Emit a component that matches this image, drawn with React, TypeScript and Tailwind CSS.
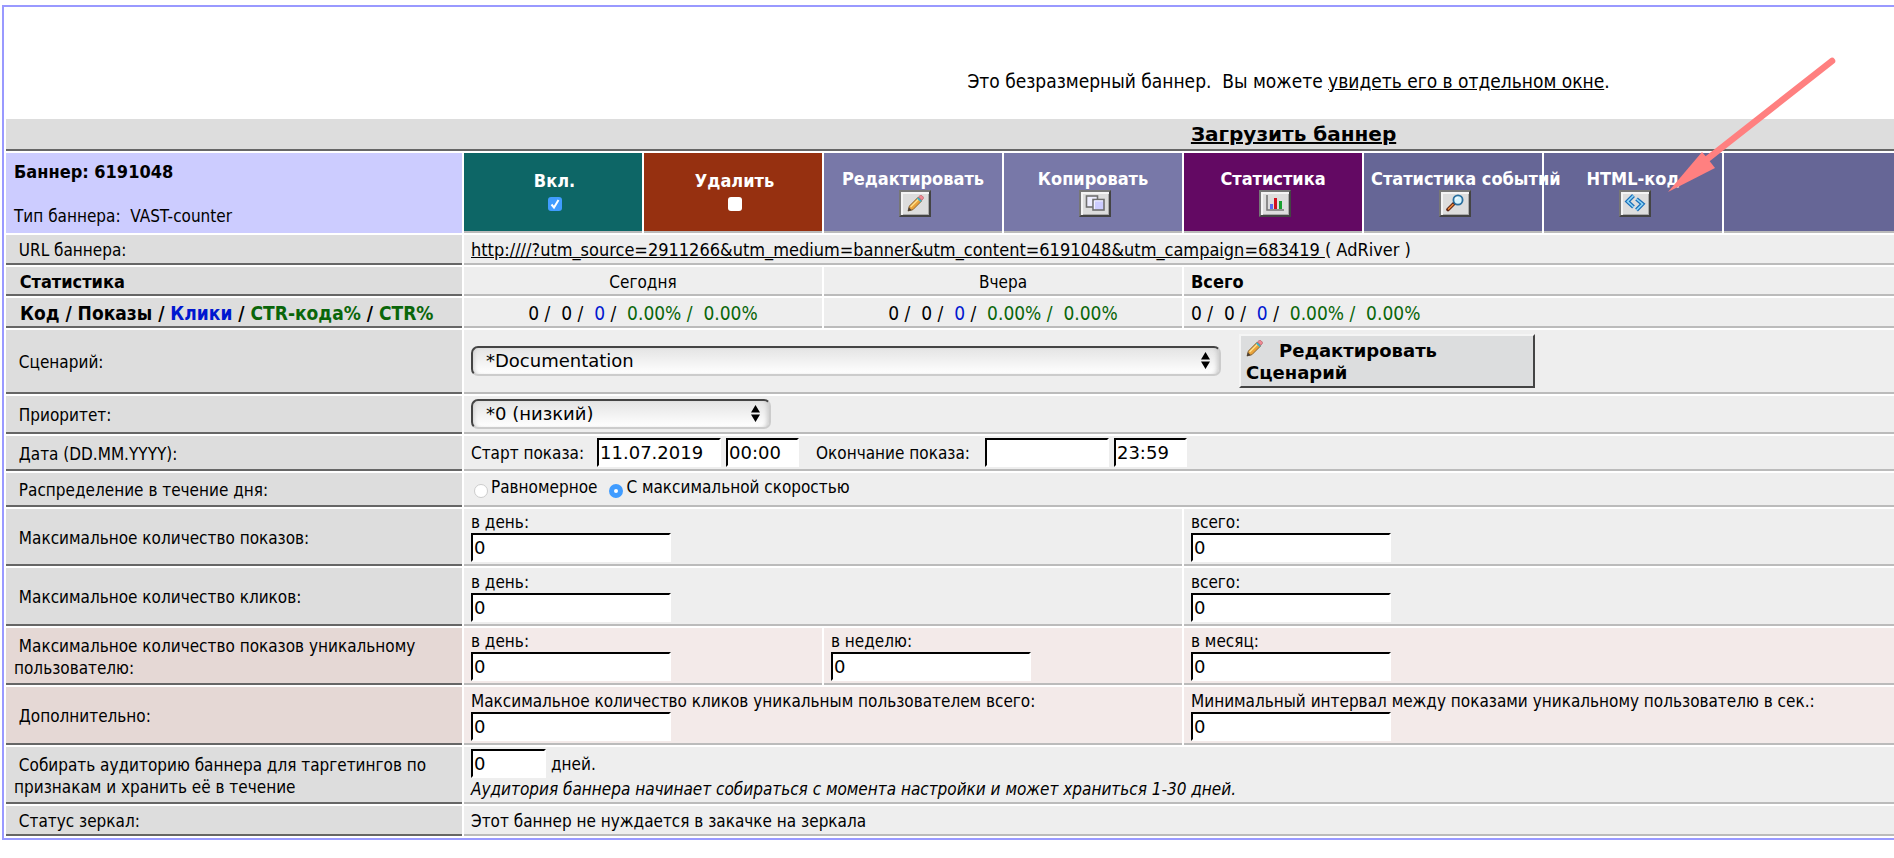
import type { ReactNode } from 'react';
import clsx from 'clsx';

const CONDENSED = "font-['DejaVu_Sans_Condensed','DejaVu_Sans',sans-serif]";
const WIDE = "font-['DejaVu_Sans',sans-serif]";

function PencilIcon() {
  return (
    <svg width="17" height="17" viewBox="0 0 16 16" aria-hidden="true">
      <path d="M1 15l1.2-4.6L10.4 2.2l3.4 3.4-8.2 8.2z" fill="#e9a23a" stroke="#7a5a2e" strokeWidth=".8" />
      <path d="M3.4 11.2l8-8" stroke="#ffe08a" strokeWidth="1.3" />
      <path d="M9.4 3.2l3.4 3.4 1.2-1.2-3.4-3.4z" fill="#35b4cf" />
      <path d="M10.8 1.8l1.4-1.2c.6-.5 1.4-.4 2 .2l.9.9c.6.6.6 1.4 0 2l-1.2 1.2z" fill="#f08a94" stroke="#b2545c" strokeWidth=".6" />
      <path d="M.8 15.2l.9-3.6 2.700 2.700z" fill="#4a4038" />
    </svg>
  );
}

function CopyIcon() {
  return (
    <svg width="20" height="18" viewBox="0 0 20 18" aria-hidden="true">
      <rect x="1.5" y="2" width="11" height="11" fill="#eeeeff" stroke="#707070" strokeWidth="1.6" />
      <rect x="8" y="5.5" width="11" height="10.5" fill="#ccccff" stroke="#707070" strokeWidth="1.6" />
      <path d="M9.4 15V6.900H18" fill="none" stroke="#f4f4ff" />
    </svg>
  );
}

function ChartIcon() {
  return (
    <svg width="20" height="18" viewBox="0 0 20 18" aria-hidden="true">
      <path d="M2 1v15h17" fill="none" stroke="#777" strokeWidth="1.6" />
      <rect x="5" y="10" width="3" height="5" fill="#5a6cf0" />
      <rect x="9" y="4" width="3" height="11" fill="#d01020" />
      <rect x="14" y="7" width="3" height="8" fill="#18a030" />
    </svg>
  );
}

function MagnifierIcon() {
  return (
    <svg width="20" height="18" viewBox="0 0 20 18" aria-hidden="true">
      <path d="M3 15.5l6-6" stroke="#5b2414" strokeWidth="3.6" strokeLinecap="round" />
      <path d="M3.500 15l4.500-4.500" stroke="#f08a3c" strokeWidth="1.6" strokeLinecap="round" />
      <circle cx="13" cy="6" r="4.600" fill="#d6f4ff" stroke="#2a6f9e" strokeWidth="1.8" />
      <path d="M10.500 5.500a2.800 2.800 0 0 1 2.500-2" fill="none" stroke="#fff" strokeWidth="1.2" />
    </svg>
  );
}

function CodeIcon() {
  return (
    <svg width="22" height="18" viewBox="0 0 22 18" aria-hidden="true">
      <path d="M9.500 1.500L3.500 7.500l6 5.500M12.500 5l6 5-6 6" fill="none" stroke="#1c6fb8" strokeWidth="4" />
      <path d="M9.500 1.500L3.500 7.500l6 5.500M12.500 5l6 5-6 6" fill="none" stroke="#8fd8fa" strokeWidth="1.6" />
    </svg>
  );
}

function ActionCell({ title, className, children }: { title: string; className: string; children: ReactNode }) {
  return (
    <td className={clsx('border-b-2 border-[#bbb] px-[7px] align-middle text-[18px] leading-[22px] font-bold text-white', className)}>
      <div className="flex flex-col items-center">
        <span className="self-stretch text-center whitespace-nowrap">{title}</span>
        <button
          type="button"
          aria-label={title}
          className="ml-1 flex h-[27px] w-8 items-center justify-center border-2 border-t-[#777] border-l-[#777] border-r-[#444] border-b-[#444] bg-[#ddd] shadow-[inset_2px_2px_0_#f4f4f4,inset_-1px_-1px_0_#aaa]"
        >
          {children}
        </button>
      </div>
    </td>
  );
}

function ToggleCell({ id, title, checked, className }: { id: string; title: string; checked?: boolean; className: string }) {
  return (
    <td className={clsx('border-b-2 border-[#bbb] pr-[7px] pb-[3px] pl-[10px] align-middle text-[18px] leading-[22px] font-bold text-white', className)}>
      <div className="flex flex-col items-center gap-[5px]">
        <label htmlFor={id}>{title}</label>
        <span className="relative flex">
          <input
            id={id}
            type="checkbox"
            defaultChecked={checked}
            className="peer size-[14px] appearance-none rounded-[3px] bg-white checked:bg-[#409cff]"
          />
          <svg className="pointer-events-none absolute inset-0 hidden peer-checked:block" width="14" height="14" viewBox="0 0 14 14" aria-hidden="true">
            <path d="M3.500 7.500l2.500 3 4.500-7.500" fill="none" stroke="#fff" strokeWidth="2" />
          </svg>
        </span>
      </div>
    </td>
  );
}

function LabelCell({ children, unique, className }: { children: ReactNode; unique?: boolean; className?: string }) {
  return (
    <th
      scope="row"
      className={clsx('border-b-2 border-[#666] px-2 pt-[2px] text-left align-middle', unique ? 'bg-[#e5d8d5]' : 'bg-[#ddd]', className ?? 'font-normal')}
    >
      &nbsp;{children}
    </th>
  );
}

function Cell({ children, span, unique, className }: { children: ReactNode; span: number; unique?: boolean; className?: string }) {
  return (
    <td colSpan={span} className={clsx('border-b-2 border-[#bbb] px-[7px] align-middle', unique ? 'bg-[#f3eae9]' : 'bg-[#eee]', className)}>
      {children}
    </td>
  );
}

function TextInput({ id, value, width, label }: { id: string; value: string; width: string; label?: string }) {
  return (
    <input
      id={id}
      type="text"
      aria-label={label}
      defaultValue={value}
      className={clsx('block h-[29px] border-2 border-t-black border-l-black border-r-white border-b-white bg-white px-px text-[18px] text-black outline-none', WIDE, width)}
    />
  );
}

function LimitField({ id, label }: { id: string; label: string }) {
  return (
    <>
      <label htmlFor={id} className="block whitespace-nowrap">{label}</label>
      <TextInput id={id} value="0" width="w-[200px]" />
    </>
  );
}

function SelectBox({ id, label, option, width }: { id: string; label: string; option: string; width: string }) {
  return (
    <div className={clsx('relative', width)}>
      <select
        id={id}
        aria-label={label}
        className={clsx(
          'block h-[30px] w-full appearance-none rounded-[7px] border-2 border-t-[#444] border-l-[#444] border-r-[#ccc] border-b-[#ccc] bg-linear-to-b from-[#e4e4e4] to-white pl-[13px] text-[18px] text-black shadow-[inset_-4px_0_4px_-2px_#ccc,inset_4px_0_4px_-3px_#ccc]',
          WIDE,
        )}
      >
        <option>{option}</option>
      </select>
      <svg className="pointer-events-none absolute top-[6px] right-[11px]" width="9" height="17" viewBox="0 0 9 17" aria-hidden="true">
        <path d="M4.500 0l4.500 7.500H0zM4.500 17l4.500-7.500H0z" fill="#000" />
      </svg>
    </div>
  );
}

function Radio({ id, label, checked }: { id: string; label: string; checked?: boolean }) {
  return (
    <span className="flex items-center">
      <input
        id={id}
        type="radio"
        name="pace"
        defaultChecked={checked}
        className="mx-[3px] mt-[7px] size-[14px] appearance-none rounded-full border border-[#ccc] bg-white checked:border-5 checked:border-[#409cff]"
      />
      <label htmlFor={id}>{label}</label>
    </span>
  );
}

function Counters() {
  return (
    <span className="text-[19px] whitespace-nowrap">
      0 /&nbsp; 0 /&nbsp; <span className="text-[#0018d0]">0</span> /&nbsp;{' '}
      <span className="text-[#0a660a]">0.00% /&nbsp; 0.00%</span>
    </span>
  );
}

export default function App() {
  return (
    <main className="relative overflow-hidden bg-white pt-[5px] pb-[18px] pl-[2px]">
      <div className={clsx('w-[136%] border-2 border-[#9999ff] text-[17px] leading-[22px] text-black', CONDENSED)}>
        <p className="flex h-[110px] items-center justify-center pt-[38px] text-[19px] whitespace-pre">
          Это безразмерный баннер.&nbsp; Вы можете <a href="#preview" className="underline">увидеть его в отдельном окне</a>.
        </p>

        <table className="w-full table-fixed border-separate border-spacing-[2px]">
          <colgroup>
            <col className="w-[456px]" />
            <col className="w-[178px]" />
            <col className="w-[178px]" />
            <col className="w-[178px]" />
            <col className="w-[178px]" />
            <col className="w-[178px]" />
            <col className="w-[178px]" />
            <col className="w-[178px]" />
            <col />
          </colgroup>
          <tbody>
            <tr className="h-8">
              <td colSpan={9} className={clsx('border-b-2 border-[#666] bg-[#ddd] pl-[10px] text-center text-[20px] font-bold', WIDE)}>
                <a href="#upload" className="underline">Загрузить баннер</a>
              </td>
            </tr>

            <tr className="h-[80px]">
              <th scope="row" className="bg-[#ccf] px-2 pt-[2px] text-left align-middle font-normal">
                <b className="text-[18px]">Баннер: 6191048</b>
                <br />
                <br />
                Тип баннера:&nbsp; VAST-counter
              </th>
              <ToggleCell id="enabled" title="Вкл." checked className="bg-[#0d6666]" />
              <ToggleCell id="remove" title="Удалить" className="bg-[#963010]" />
              <ActionCell title="Редактировать" className="bg-[#7878a8]"><PencilIcon /></ActionCell>
              <ActionCell title="Копировать" className="bg-[#7878a8]"><CopyIcon /></ActionCell>
              <ActionCell title="Статистика" className="bg-[#630963]"><ChartIcon /></ActionCell>
              <ActionCell title="Статистика событий" className="bg-[#666696]"><MagnifierIcon /></ActionCell>
              <ActionCell title="HTML-код" className="bg-[#666696]"><CodeIcon /></ActionCell>
              <td className="border-b-2 border-[#bbb] bg-[#666696]" />
            </tr>

            <tr className="h-[30px]">
              <LabelCell>URL баннера:</LabelCell>
              <Cell span={8} className="pt-[2px] text-[18px]">
                <a href="#url" className="whitespace-pre underline">http:////?utm_source=2911266&amp;utm_medium=banner&amp;utm_content=6191048&amp;utm_campaign=683419 </a>( AdRiver )
              </Cell>
            </tr>

            <tr className="h-[29px]">
              <LabelCell className="text-[18px] font-bold">Статистика</LabelCell>
              <Cell span={2} className="pt-[2px] text-center">Сегодня</Cell>
              <Cell span={2} className="pt-[2px] text-center">Вчера</Cell>
              <Cell span={4} className="pt-[2px] text-[18px] font-bold">Всего</Cell>
            </tr>

            <tr className="h-[30px]">
              <LabelCell className="text-[19px] font-bold whitespace-nowrap">
                Код / Показы / <span className="text-[#0018d0]">Клики</span> / <span className="text-[#0a660a]">CTR-кода%</span> /{' '}
                <span className="text-[#0a660a]">CTR%</span>
              </LabelCell>
              <Cell span={2} className="pt-[2px] text-center"><Counters /></Cell>
              <Cell span={2} className="pt-[2px] text-center"><Counters /></Cell>
              <Cell span={4} className="pt-[2px]"><Counters /></Cell>
            </tr>

            <tr className="h-16">
              <LabelCell><label htmlFor="scenario">Сценарий:</label></LabelCell>
              <Cell span={8}>
                <div className="flex items-center gap-[18px]">
                  <SelectBox id="scenario" label="Сценарий" option="*Documentation" width="w-[750px]" />
                  <button
                    type="button"
                    className={clsx('h-[54px] w-[296px] border-2 border-t-[#f5f5f5] border-l-[#f5f5f5] border-r-[#444] border-b-[#444] bg-[#dcddde] pt-[2px] pl-[5px] text-left text-[18px] leading-[22px] font-bold', WIDE)}
                  >
                    <span className="flex h-[22px] items-start gap-4"><PencilIcon />Редактировать</span>
                    Сценарий
                  </button>
                </div>
              </Cell>
            </tr>

            <tr className="h-[38px]">
              <LabelCell><label htmlFor="priority">Приоритет:</label></LabelCell>
              <Cell span={8}>
                <SelectBox id="priority" label="Приоритет" option="*0 (низкий)" width="w-[300px]" />
              </Cell>
            </tr>

            <tr className="h-[35px]">
              <LabelCell>Дата (DD.MM.YYYY):</LabelCell>
              <Cell span={8}>
                <div className="flex items-center gap-[5px]">
                  <label htmlFor="start-date" className="mr-2">Старт показа:</label>
                  <TextInput id="start-date" value="11.07.2019" width="w-[124px]" />
                  <TextInput id="start-time" label="Время старта" value="00:00" width="w-[73px]" />
                  <label htmlFor="end-date" className="mr-[10px] ml-3">Окончание показа:</label>
                  <TextInput id="end-date" value="" width="w-[124px]" />
                  <TextInput id="end-time" label="Время окончания" value="23:59" width="w-[73px]" />
                </div>
              </Cell>
            </tr>

            <tr className="h-[34px]">
              <LabelCell>Распределение в течение дня:</LabelCell>
              <Cell span={8}>
                <div className="flex items-center gap-[9px] pb-1">
                  <Radio id="pace-even" label="Равномерное" />
                  <Radio id="pace-max" label="С максимальной скоростью" checked />
                </div>
              </Cell>
            </tr>

            <tr className="h-[57px]">
              <LabelCell>Максимальное количество показов:</LabelCell>
              <Cell span={4}><LimitField id="shows-day" label="в день:" /></Cell>
              <Cell span={4}><LimitField id="shows-total" label="всего:" /></Cell>
            </tr>

            <tr className="h-[58px]">
              <LabelCell>Максимальное количество кликов:</LabelCell>
              <Cell span={4}><LimitField id="clicks-day" label="в день:" /></Cell>
              <Cell span={4}><LimitField id="clicks-total" label="всего:" /></Cell>
            </tr>

            <tr className="h-[57px]">
              <LabelCell unique>Максимальное количество показов уникальному пользователю:</LabelCell>
              <Cell span={2} unique><LimitField id="unique-day" label="в день:" /></Cell>
              <Cell span={2} unique><LimitField id="unique-week" label="в неделю:" /></Cell>
              <Cell span={4} unique><LimitField id="unique-month" label="в месяц:" /></Cell>
            </tr>

            <tr className="h-[58px]">
              <LabelCell unique>Дополнительно:</LabelCell>
              <Cell span={4} unique>
                <LimitField id="unique-clicks" label="Максимальное количество кликов уникальным пользователем всего:" />
              </Cell>
              <Cell span={4} unique>
                <LimitField id="unique-interval" label="Минимальный интервал между показами уникальному пользователю в сек.:" />
              </Cell>
            </tr>

            <tr className="h-[57px]">
              <LabelCell>Собирать аудиторию баннера для таргетингов по признакам и хранить её в течение</LabelCell>
              <Cell span={8}>
                <div className="flex items-center gap-[5px]">
                  <TextInput id="audience-days" value="0" width="w-[75px]" />
                  <label htmlFor="audience-days">дней.</label>
                </div>
                <i>Аудитория баннера начинает собираться с момента настройки и может храниться 1-30 дней.</i>
              </Cell>
            </tr>

            <tr className="h-[30px]">
              <LabelCell>Статус зеркал:</LabelCell>
              <Cell span={8} className="pt-[2px]">Этот баннер не нуждается в закачке на зеркала</Cell>
            </tr>
          </tbody>
        </table>
      </div>

      {/* Pointer to the HTML-код button */}
      <svg className="pointer-events-none absolute top-[50px] left-[1660px]" width="190" height="150" viewBox="0 0 190 150" aria-hidden="true">
        <path d="M46 110L172 11" stroke="#ff8080" strokeWidth="6.500" strokeLinecap="round" />
        <path d="M8 142L42 102L48 109L55 118z" fill="#ff8080" />
      </svg>
    </main>
  );
}
